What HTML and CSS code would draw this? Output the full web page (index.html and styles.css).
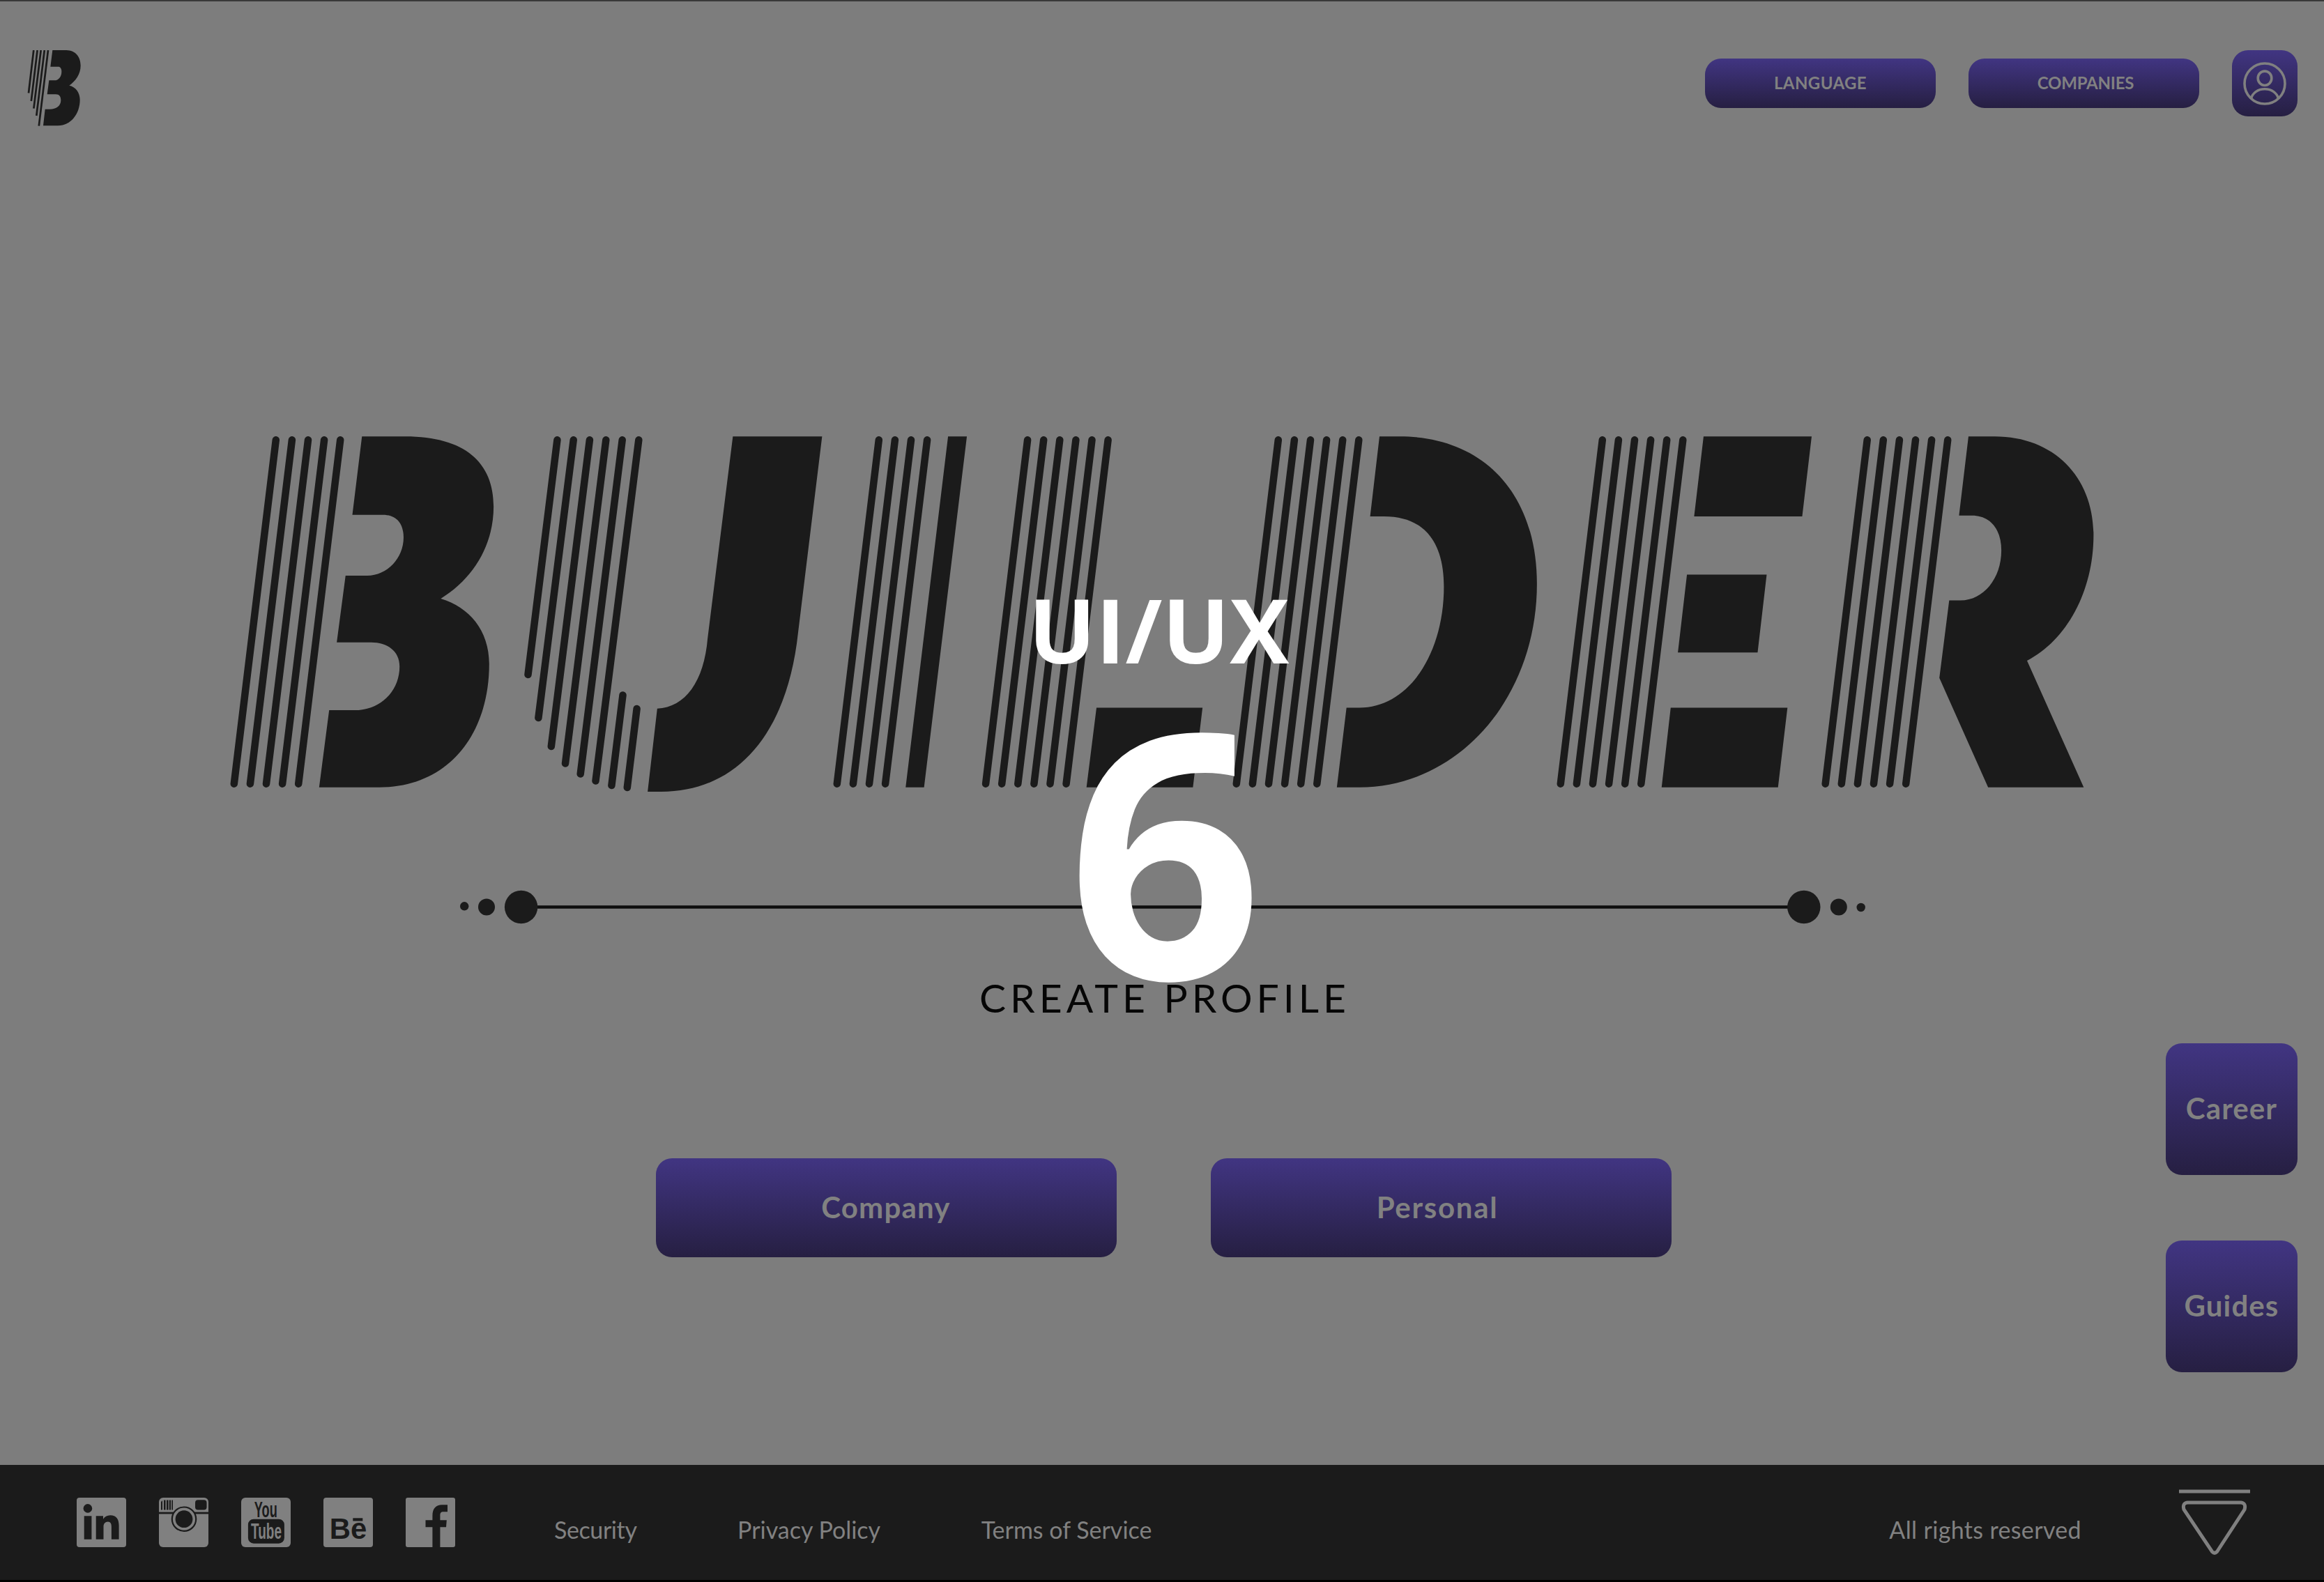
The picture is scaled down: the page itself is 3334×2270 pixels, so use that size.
FILE: index.html
```html
<!DOCTYPE html>
<html lang="en">
<head>
<meta charset="utf-8">
<title>Builder</title>
<link rel="stylesheet" href="styles.css">
</head>
<body>
<div class="page">
  <header class="header">
    <svg class="brand" viewBox="39 72 78 109" role="img" aria-label="Builder">
      <g class="brand-lines">
        <path d="M48.3 72L41 133.5"/><path d="M53.6 72L44.8 145"/><path d="M58.7 72L48.4 155.7"/><path d="M63.8 72L52.3 166"/><path d="M69 72L55.8 180.6"/>
      </g>
      <path class="ink" transform="scale(.33333)" d="M226 216H285C325 216 347 245 347 283C347 320 325 350 298 368C327 374 344 400 344 430C344 490 305 541 250 541H186L194 470H215C242 470 262 455 262 432C262 416 255 406 240 406H203L211 346H235C252 346 265 330 265 308C265 295 260 287 250 287H217Z"/>
    </svg>
    <nav class="header-nav">
      <a class="btn btn-small language">LANGUAGE</a>
      <a class="btn btn-small companies">COMPANIES</a>
      <a class="btn btn-user" aria-label="Account">
        <svg class="user" viewBox="0 0 62 62">
          <circle cx="31" cy="31" r="29"/>
          <ellipse cx="31" cy="23.3" rx="9.8" ry="10.2"/>
          <path d="M11.5 52.2C13.5 44.5 21 38.8 31 38.8S48.5 44.5 50.5 52.2"/>
        </svg>
      </a>
    </nav>
  </header>

  <main class="main">
    <section class="hero">
      <svg class="wordmark" viewBox="318 616 2701 530" role="img" aria-label="BUILDER">
        <defs>
          <path id="bar" d="M0 631.3L-60 1124.7"/>
          <g id="bars4"><use href="#bar"/><use href="#bar" x="23.1"/><use href="#bar" x="46.2"/><use href="#bar" x="69.3"/></g>
          <g id="bars5"><use href="#bars4"/><use href="#bar" x="92.4"/></g>
          <g id="bars6"><use href="#bars5"/><use href="#bar" x="115.5"/></g>
        </defs>
        <g class="stripes">
          <use href="#bars5" x="395.8"/>
          <path d="M799.4 631.3L757.500 968M822.7 631.3L772.4 1030M845.9 631.3L790.8 1071M869.3 631.3L811 1095.5M892.7 631.3L832.7 1110.5M916.3 631.3L854.5 1120.5M893.5 997.5L877.4 1127M913.6 1017L899.8 1130"/>
          <use href="#bars4" x="1260.8"/>
          <use href="#bars6" x="1474.1"/>
          <use href="#bars6" x="1833.8"/>
          <use href="#bars6" x="2298.8"/>
          <use href="#bars6" x="2678.7"/>
        </g>
        <g class="ink">
          <path transform="translate(300 590) scale(.574 .3699)" d="M382 98H490C640 98 711 200 711 370C711 520 660 650 579 727C650 760 700 850 700 980C700 1250 600 1459 425 1459H275L300 1160H365C425 1160 476 1090 476 990C476 930 445 897 405 897H319L341 638H395C445 638 486 570 486 490C486 430 465 402 435 402H358Z"/>
          <path transform="translate(300 590) scale(.574 .3699)" d="M1309 98H1532L1472 860C1445 1250 1320 1476 1130 1476H1096L1120 1154C1190 1148 1237 1050 1246 880Z"/>
          <path transform="translate(1150 590) scale(.574 .3699)" d="M366 98H413L306 1459H260ZM737 1150H1002L978 1459H712Z"/>
          <path transform="translate(1700 590) scale(.4464 .3699)" d="M625 98H690C960 98 1131 320 1131 670C1131 1110 880 1459 560 1459H488L519 1150H560C720 1150 832 940 832 680C832 510 770 408 640 408H595Z"/>
          <path transform="translate(2200 590) scale(.5421 .3699)" d="M450 98H736L711 408H425ZM406 634H617L593 936H382ZM363 1150H672L647 1459H339Z"/>
          <path transform="translate(2200 590) scale(.5421 .3699)" d="M1151 98H1220C1380 98 1482 260 1482 480C1482 700 1410 890 1306 968L1456 1459H1203L1074 1035L1100 734H1130C1190 734 1238 650 1238 540C1238 460 1210 405 1160 405H1126Z"/>
        </g>
      </svg>

      <svg class="divider" viewBox="651 1276 2035 52" aria-hidden="true">
        <path d="M748 1301.5H2588"/>
        <circle cx="666.2" cy="1300.3" r="6.2"/><circle cx="698" cy="1301.5" r="12"/><circle cx="747.6" cy="1301.5" r="23.7"/>
        <circle cx="2587.8" cy="1301.5" r="23.7"/><circle cx="2637.8" cy="1301.5" r="12"/><circle cx="2669.7" cy="1302" r="6.2"/>
      </svg>

      <h1 class="title">CREATE PROFILE</h1>

      <div class="choices">
        <a class="btn btn-large company">Company</a>
        <a class="btn btn-large personal">Personal</a>
      </div>
    </section>

    <aside class="side">
      <a class="btn btn-tile">Career</a>
      <a class="btn btn-tile">Guides</a>
    </aside>
  </main>

  <footer class="footer">
    <div class="social">
      <svg viewBox="0 0 71 71" aria-label="LinkedIn">
        <rect class="tile" width="71" height="71" rx="4"/>
        <g class="ink"><circle cx="15.9" cy="15.4" r="6.3"/><rect x="10.7" y="26.3" width="10.7" height="33.5"/>
        <path d="M27.7 26.3H38V30.8C40 27.5 43.5 25.3 48.2 25.3C57 25.3 60.6 31 60.6 40V59.8H49.900V42C49.9 37.5 48.5 34.6 44.8 34.6C40.8 34.6 38.5 37.5 38.5 42V59.8H27.7Z"/></g>
      </svg>
      <svg viewBox="0 0 71 71" aria-label="Instagram">
        <rect class="tile" width="71" height="71" rx="6"/>
        <g class="ink"><rect y="20.6" width="71" height="2.8"/>
        <path d="M3 6L5 4V17.5H3ZM7 3.5H9.5V17.5H7ZM11 3.5H13.5V17.5H11ZM14.8 3.5H17V17.5H14.8ZM18.3 3.5H20V17.5H18.3Z"/>
        <rect x="52" y="3.2" width="16.5" height="14.4" rx="4"/></g>
        <circle class="lens-ring" cx="36" cy="30.7" r="17.2"/><circle class="ink" cx="36" cy="30.7" r="12.4"/>
      </svg>
      <svg viewBox="0 0 71 71" aria-label="YouTube">
        <rect class="tile" width="71" height="71" rx="6"/>
        <text class="yt ink" x="18.8" y="28" textLength="33" lengthAdjust="spacingAndGlyphs">You</text>
        <rect class="ink" x="9.9" y="30.7" width="52" height="35" rx="8"/>
        <text class="yt tile" x="14" y="59" textLength="44" lengthAdjust="spacingAndGlyphs">Tube</text>
      </svg>
      <svg viewBox="0 0 71 71" aria-label="Behance">
        <rect class="tile" width="71" height="71" rx="4"/>
        <text class="be ink" x="8.7" y="59" textLength="53.5" lengthAdjust="spacingAndGlyphs">Be</text>
        <rect class="ink" x="42.3" y="29.3" width="14" height="4.2"/>
      </svg>
      <svg viewBox="0 0 71 71" aria-label="Facebook">
        <rect class="tile" width="71" height="71" rx="3"/>
        <path class="ink" d="M38.4 71V42.3H28.5V32.3H38.4V26C38.4 15.5 43.5 10.3 52 10.3H60V20.3H54C50.5 20.3 49.4 22 49.4 25.5V32.3H58.8L58 42.3H49.4V71Z"/>
      </svg>
    </div>
    <nav class="links">
      <a class="security">Security</a>
      <a>Privacy Policy</a>
      <a>Terms of Service</a>
    </nav>
    <span class="rights">All rights reserved</span>
    <svg class="down" viewBox="0 0 102 96" aria-hidden="true">
      <path d="M0 4H102"/>
      <path d="M12 20H89Q96.5 21 94 30L54.5 90.5Q51 94 47.5 90.5L7 30Q4.5 21 12 20Z"/>
    </svg>
  </footer>

  <div class="overlay">
    <p class="topic">UI/UX</p>
    <p class="number">6</p>
  </div>
</div>
</body>
</html>
```
FILE: styles.css
```css
* { box-sizing: border-box; }

body {
  margin: 0;
  background: #7d7d7d;
  color: #818181;
  font-family: "Lato", "Open Sans", sans-serif;
}

svg { display: block; }

.page {
  position: relative;
  display: flex;
  flex-direction: column;
  width: 3334px;
  height: 2270px;
  overflow: hidden;
  border-top: 2px solid #393939;
}

.ink { fill: #1b1b1b; }
.tile { fill: #808080; }

/* Header */
.header {
  display: flex;
  justify-content: space-between;
  align-items: flex-start;
  padding: 70px 38px 0 39px;
}

.brand { width: 78px; height: 109px; }
.brand-lines { fill: none; stroke: #1b1b1b; stroke-width: 2.7px; }

.header-nav { display: flex; align-items: center; gap: 47px; }

.btn {
  display: flex;
  align-items: center;
  justify-content: center;
  border-radius: 23px;
  background: linear-gradient(#413582, #261f42);
  font-weight: 700;
}

.btn-small {
  width: 331px;
  height: 71px;
  padding-bottom: 2px;
  font-size: 24px;
}
.language { letter-spacing: 0.4px; }
.companies { padding-left: 5px; letter-spacing: -0.2px; }

.btn-user { width: 94px; height: 95px; }
.user { width: 62px; height: 62px; fill: none; stroke: #808080; stroke-width: 3.6px; }

/* Main area: the hero and the side tiles share one grid cell */
.main { display: grid; flex: 1; }
.hero, .side { grid-area: 1 / 1; }

.hero {
  display: flex;
  flex-direction: column;
  align-items: center;
  padding: 435px 0 0 3px;
}

.wordmark { width: 2701px; height: 530px; }
.stripes { fill: none; stroke: #1b1b1b; stroke-width: 10.5px; stroke-linecap: round; }

.divider { width: 2035px; height: 52px; margin-top: 130px; fill: #1b1b1b; }
.divider path { stroke: #0e0e0e; stroke-width: 4.6px; }

.title {
  margin: 73px 0 201px;
  padding-left: 5px;
  color: #060606;
  font-size: 57px;
  font-weight: 400;
  line-height: 60px;
  letter-spacing: 6px;
}

.choices { display: flex; gap: 135px; padding-left: 1px; }

.btn-large { width: 661px; height: 142px; padding-bottom: 3px; font-size: 42px; }
.company { letter-spacing: 1.2px; }
.personal { padding-right: 10px; letter-spacing: 1.7px; }

.side {
  display: flex;
  flex-direction: column;
  gap: 94px;
  justify-self: end;
  padding: 1316px 38px 0 0;
}
.btn-tile {
  width: 189px;
  height: 189px;
  padding-bottom: 3px;
  font-size: 42px;
  letter-spacing: 1.1px;
}

/* Footer */
.footer {
  display: flex;
  align-items: flex-start;
  height: 168px;
  padding: 0 106px 0 110px;
  border-bottom: 3px solid #000;
  background: #1b1b1b;
  font-size: 34px;
  line-height: 40px;
}

.social { display: flex; gap: 47px; margin: 47px 142px 0 0; }
.social svg { width: 71px; height: 71px; }
.lens-ring { fill: #808080; stroke: #1b1b1b; stroke-width: 2.2px; }
.yt { font: 700 32px "Liberation Sans", sans-serif; }
.be { font: 700 43px "Liberation Sans", sans-serif; }

.links { display: flex; gap: 144.5px; margin-top: 73px; }
.security { letter-spacing: -0.4px; }

.rights { margin: 73px 140px 0 auto; letter-spacing: 0.35px; }

.down { width: 102px; height: 96px; margin-top: 34px; fill: none; stroke: #808080; stroke-width: 5px; }

/* Title card laid over the whole page */
.overlay {
  position: absolute;
  inset: 0;
  display: flex;
  flex-direction: column;
  align-items: center;
  padding-top: 836px;
  color: #fff;
  font-family: "Open Sans", sans-serif;
  font-weight: 700;
}
.topic { margin: 0; padding-right: 9px; font-size: 127.5px; line-height: 130px; letter-spacing: 0.3px; }
.number { margin: 2px 0 0; padding-left: 9px; font-size: 490px; line-height: 490px; }
```
